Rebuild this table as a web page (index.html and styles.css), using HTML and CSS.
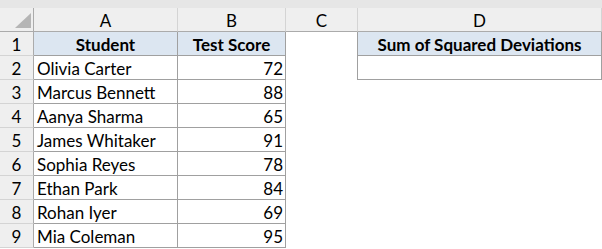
FILE: index.html
```html
<!DOCTYPE html>
<html>
<head>
<meta charset="utf-8">
<link rel="stylesheet" href="styles.css">
</head>
<body>
<div class="topbar"></div>
<div class="sheet">
  <div class="ch corner"><span class="tri"></span></div>
  <div class="ch">A</div>
  <div class="ch">B</div>
  <div class="ch">C</div>
  <div class="ch">D</div>
  <div class="ch fill"></div>

  <div class="rh">1</div>
  <div class="c b hd">Student</div>
  <div class="c b hd">Test Score</div>
  <div class="c cr"></div>
  <div class="c b hd">Sum of Squared Deviations</div>
  <div class="c"></div>

  <div class="rh">2</div>
  <div class="c b">Olivia Carter</div>
  <div class="c b num">72</div>
  <div class="c cr"></div>
  <div class="c b"></div>
  <div class="c"></div>

  <div class="rh">3</div>
  <div class="c b">Marcus Bennett</div>
  <div class="c b num">88</div>
  <div class="c"></div>
  <div class="c"></div>
  <div class="c"></div>

  <div class="rh">4</div>
  <div class="c b">Aanya Sharma</div>
  <div class="c b num">65</div>
  <div class="c"></div>
  <div class="c"></div>
  <div class="c"></div>

  <div class="rh">5</div>
  <div class="c b">James Whitaker</div>
  <div class="c b num">91</div>
  <div class="c"></div>
  <div class="c"></div>
  <div class="c"></div>

  <div class="rh">6</div>
  <div class="c b">Sophia Reyes</div>
  <div class="c b num">78</div>
  <div class="c"></div>
  <div class="c"></div>
  <div class="c"></div>

  <div class="rh">7</div>
  <div class="c b">Ethan Park</div>
  <div class="c b num">84</div>
  <div class="c"></div>
  <div class="c"></div>
  <div class="c"></div>

  <div class="rh">8</div>
  <div class="c b">Rohan Iyer</div>
  <div class="c b num">69</div>
  <div class="c"></div>
  <div class="c"></div>
  <div class="c"></div>

  <div class="rh">9</div>
  <div class="c b">Mia Coleman</div>
  <div class="c b num">95</div>
  <div class="c"></div>
  <div class="c"></div>
  <div class="c"></div>
</div>
</body>
</html>
```
FILE: styles.css
```css
html, body {
  margin: 0;
  padding: 0;
  background: #ffffff;
  overflow: hidden;
}
body {
  font-family: Lato, "Open Sans", sans-serif;
  font-size: 17px;
  color: #000000;
}
.topbar {
  height: 8px;
  background: #e6e6e6;
}
.sheet {
  display: grid;
  grid-template-columns: 34px 144px 108px 72px 244px 1fr;
  grid-template-rows: 24px repeat(9, 24px);
}
.ch {
  background: #efefef;
  border-right: 1px solid #d4d4d4;
  border-bottom: 1px solid #ababab;
  display: flex;
  align-items: center;
  justify-content: center;
  line-height: 1;
  padding-top: 1px;
  box-sizing: border-box;
}
.ch.fill {
  border-right: none;
}
.corner {
  position: relative;
  border-right-color: #ababab;
}
.tri {
  position: absolute;
  right: 2px;
  bottom: 3px;
  width: 0;
  height: 0;
  border-left: 16px solid transparent;
  border-bottom: 15px solid #b5b5b5;
}
.rh {
  background: #efefef;
  border-right: 1px solid #ababab;
  border-bottom: 1px solid #d4d4d4;
  display: flex;
  align-items: center;
  justify-content: center;
  box-sizing: border-box;
  padding-top: 1px;
}
.c {
  box-sizing: border-box;
  display: flex;
  align-items: center;
  padding: 1px 3px 0 3px;
  white-space: nowrap;
  overflow: hidden;
}
.c.b {
  border-right: 1px solid #a0a0a0;
  border-bottom: 1px solid #a0a0a0;
}
.c.cr {
  border-right: 1px solid #a0a0a0;
}
.c.hd {
  background: #dce6f1;
  font-weight: 700;
  justify-content: center;
}
.c.num {
  justify-content: flex-end;
  padding-right: 2px;
}
```
